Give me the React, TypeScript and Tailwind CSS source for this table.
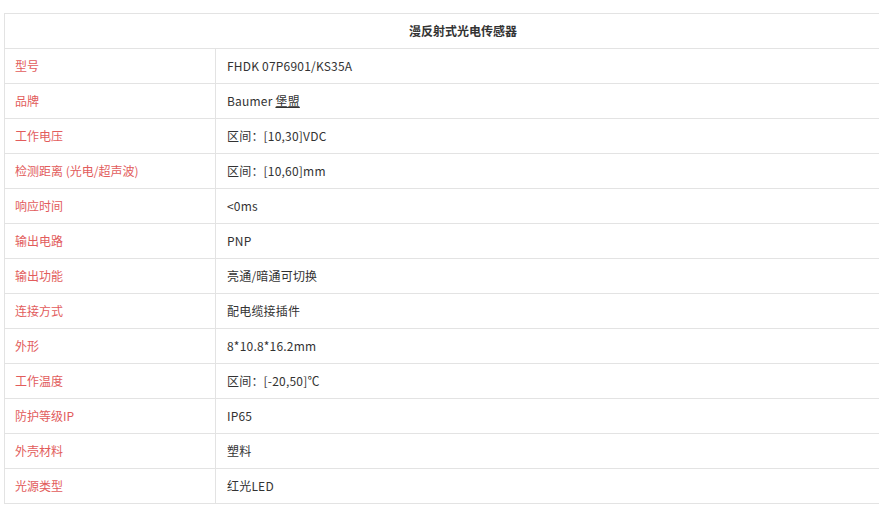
import React from "react";

const rows: [string, string][] = [
  ["型号", "FHDK 07P6901/KS35A"],
  ["品牌", "Baumer 堡盟"],
  ["工作电压", "区间：[10,30]VDC"],
  ["检测距离 (光电/超声波)", "区间：[10,60]mm"],
  ["响应时间", "<0ms"],
  ["输出电路", "PNP"],
  ["输出功能", "亮通/暗通可切换"],
  ["连接方式", "配电缆接插件"],
  ["外形", "8*10.8*16.2mm"],
  ["工作温度", "区间：[-20,50]℃"],
  ["防护等级IP", "IP65"],
  ["外壳材料", "塑料"],
  ["光源类型", "红光LED"],
];

export default function App() {
  return (
    <div
      className="h-[524px] w-[879px] overflow-hidden bg-white pl-[4px] pt-[13px]"
      style={{ fontFamily: '"Noto Sans CJK SC", "Noto Sans", sans-serif' }}
    >
      <table className="w-[918px] table-fixed border-collapse text-[12px] text-[#333]">
        <colgroup>
          <col className="w-[211px]" />
          <col />
        </colgroup>
        <tbody>
          <tr className="h-[35px]">
            <td colSpan={2} className="border border-[#e3e3e3] text-center font-bold">
              漫反射式光电传感器
            </td>
          </tr>
          {rows.map(([label, value]) => (
            <tr key={label} className="h-[35px]">
              <td className="border border-[#e3e3e3] pl-[10px] text-[#e25c5c]">{label}</td>
              <td className="border border-[#e3e3e3] pl-[11px] tracking-[0.2px]">
                {label === "品牌" ? (
                  <>
                    Baumer <span className="underline">堡盟</span>
                  </>
                ) : (
                  value
                )}
              </td>
            </tr>
          ))}
        </tbody>
      </table>
    </div>
  );
}
